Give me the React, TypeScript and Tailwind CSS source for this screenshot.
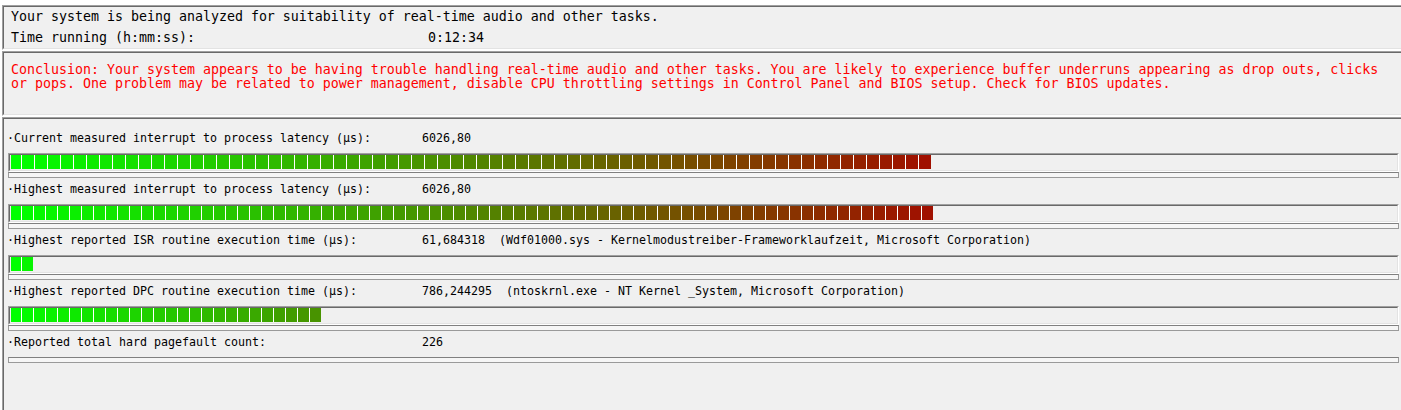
import type { ReactNode } from "react"

const mono = { fontFamily: '"DejaVu Sans Mono", "Liberation Mono", monospace' }

interface BarSpec {
  count: number
  segClass: string
  tEnd: number
}

interface Row {
  label: string
  value: string
  bar?: BarSpec
}

const rows: Row[] = [
  {
    label: "·Current measured interrupt to process latency (µs):",
    value: "6026,80",
    bar: { count: 71, segClass: "w-[12px]", tEnd: 1 },
  },
  {
    label: "·Highest measured interrupt to process latency (µs):",
    value: "6026,80",
    bar: { count: 77, segClass: "w-[11px]", tEnd: 1 },
  },
  {
    label: "·Highest reported ISR routine execution time (µs):",
    value: "61,684318  (Wdf01000.sys - Kernelmodustreiber-Frameworklaufzeit, Microsoft Corporation)",
    bar: { count: 2, segClass: "w-[11px]", tEnd: 0.04 },
  },
  {
    label: "·Highest reported DPC routine execution time (µs):",
    value: "786,244295  (ntoskrnl.exe - NT Kernel _System, Microsoft Corporation)",
    bar: { count: 26, segClass: "w-[11px]", tEnd: 0.45 },
  },
  {
    label: "·Reported total hard pagefault count:",
    value: "226",
  },
]

// green -> dark red, like the meter in the original tool
function segColor(t: number) {
  const r = Math.round(160 * t)
  const g = Math.round(255 - 239 * t)
  return `rgb(${r}, ${g}, 0)`
}

function Panel({ className, children }: { className: string; children: ReactNode }) {
  return (
    <div
      className={
        "w-[1410px] shrink-0 border border-t-[#a0a0a0] border-l-[#a0a0a0] border-r-white border-b-white " + className
      }
    >
      <div className="h-full border border-t-[#696969] border-l-[#696969] border-r-[#e3e3e3] border-b-[#e3e3e3] bg-[#f0f0f0]">
        {children}
      </div>
    </div>
  )
}

function Meter({ bar }: { bar: BarSpec }) {
  return (
    <div className="ml-px mt-[7px] h-[19px] w-[1391px] border border-t-[#a0a0a0] border-l-[#a0a0a0] border-r-white border-b-white">
      <div className="flex h-full border border-t-[#696969] border-l-[#696969] border-r-[#e3e3e3] border-b-[#e3e3e3] pl-px pb-px">
        <div className="flex gap-px bg-white">
          {Array.from({ length: bar.count }).map((_, i) => {
            const t = bar.count > 1 ? (i / (bar.count - 1)) * bar.tEnd : 0
            return (
              <div
                key={i}
                className={"h-full " + (i === 0 ? "w-[10px]" : bar.segClass)}
                style={{ backgroundColor: segColor(t) }}
              />
            )
          })}
        </div>
      </div>
    </div>
  )
}

export default function App() {
  return (
    <div
      className="flex h-[410px] w-[1401px] flex-col gap-px overflow-hidden bg-white pl-[2px] pt-[5px] text-black"
      style={mono}
    >
      <Panel className="h-[45px]">
        <div className="pl-[7px] pt-[2px] text-[13.29px] leading-[16px]">
          <div className="h-[16px] whitespace-pre">
            Your system is being analyzed for suitability of real-time audio and other tasks.
          </div>
          <div className="mt-[5px] flex h-[16px] whitespace-pre">
            <span className="w-[417px]">Time running (h:mm:ss):</span>
            <span>0:12:34</span>
          </div>
        </div>
      </Panel>

      <Panel className="h-[65px]">
        <div className="pl-[7px] pt-[10px] text-[13.29px] leading-[14px] text-[#ff0000] whitespace-pre">
          Conclusion: Your system appears to be having trouble handling real-time audio and other tasks. You are likely to
          experience buffer underruns appearing as drop outs, clicks
          <br />
          or pops. One problem may be related to power management, disable CPU throttling settings in Control Panel and
          BIOS setup. Check for BIOS updates.
        </div>
      </Panel>

      <Panel className="h-[300px]">
        <div className="pl-[3px] pt-[11px] text-[11.63px]">
          {rows.map((row) => (
            <div key={row.label} className="mb-[3px]">
              <div className="flex h-[16px] items-center whitespace-pre leading-[16px]">
                <span className="w-[415px]">{row.label}</span>
                <span>{row.value}</span>
              </div>
              {row.bar ? <Meter bar={row.bar} /> : <div className="h-[7px]" />}
              <div className="ml-px h-[6px] w-[1391px] border border-[#9a9a9a] border-t-[#808080] bg-[#f6f6f6]" />
            </div>
          ))}
        </div>
      </Panel>
    </div>
  )
}
